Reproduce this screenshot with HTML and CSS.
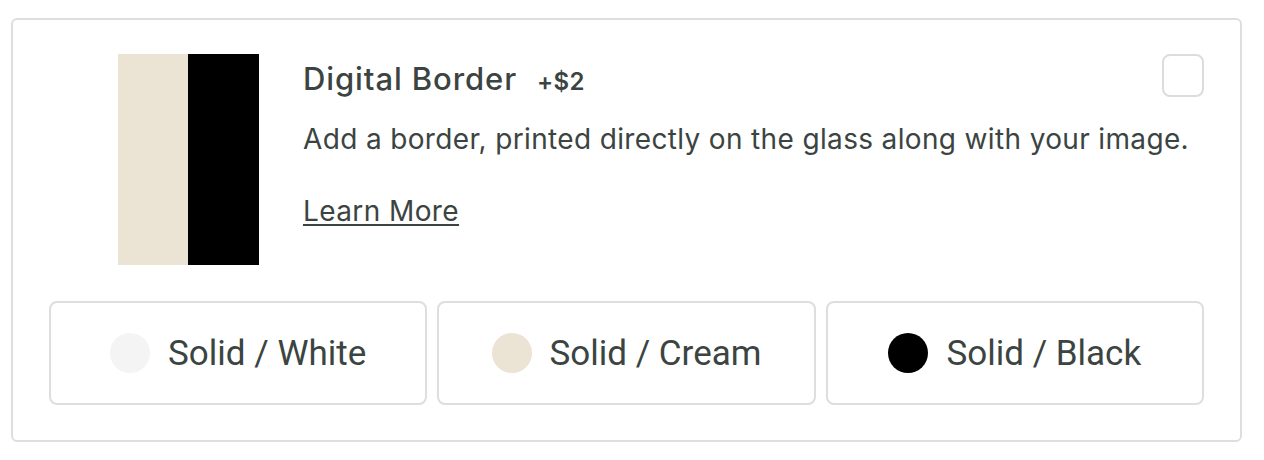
FILE: index.html
```html
<!DOCTYPE html>
<html lang="en">
<head>
<meta charset="utf-8">
<title>Digital Border</title>
<link rel="stylesheet" href="styles.css">
</head>
<body>
<div class="page">
  <section class="card">
    <div class="top">
      <div class="preview">
        <div class="half cream"></div>
        <div class="half black"></div>
      </div>
      <div class="info">
        <div class="title-row">
          <div class="heading">
            <span class="title">Digital Border</span>
            <span class="price">+$2</span>
          </div>
          <div class="checkbox"></div>
        </div>
        <p class="desc">Add a border, printed directly on the glass along with your image.</p>
        <a class="learn" href="#">Learn More</a>
      </div>
    </div>
    <div class="options">
      <button class="option"><span class="dot dot-white"></span><span class="label">Solid / White</span></button>
      <button class="option"><span class="dot dot-cream"></span><span class="label">Solid / Cream</span></button>
      <button class="option"><span class="dot dot-black"></span><span class="label">Solid / Black</span></button>
    </div>
  </section>
</div>
</body>
</html>
```

FILE: styles.css
```css
* { box-sizing: border-box; }
html, body { margin: 0; background: #fff; }
body {
  font-family: Roboto, "Liberation Sans", Arial, sans-serif;
  color: #3b4441;
}
.page {
  padding: 18px 22px 18px 11px;
}
.card {
  border: 2px solid #dedede;
  border-radius: 6px;
  padding: 34px 36px 35px 36px;
}
.top {
  display: flex;
  align-items: flex-start;
}
.preview {
  display: flex;
  width: 141px;
  height: 211px;
  margin-left: 69px;
  flex: none;
}
.half { height: 100%; }
.cream { width: 70px; background: #ebe3d4; }
.black { width: 71px; background: #000; }
.info {
  flex: 1;
  min-width: 0;
  margin-left: 44px;
  padding-top: 7px;
  font-family: Inter, Roboto, sans-serif;
}
.title-row {
  display: flex;
  justify-content: space-between;
  align-items: flex-start;
  height: 36px;
}
.heading {
  display: flex;
  align-items: baseline;
  line-height: 36px;
}
.title {
  font-size: 31px;
  font-weight: 500;
  letter-spacing: 0.9px;
}
.price {
  font-size: 24px;
  font-weight: 600;
  letter-spacing: 0.4px;
  margin-left: 20px;
}
.checkbox {
  flex: none;
  width: 42px;
  height: 43px;
  margin-top: -7px;
  border: 2px solid #dcdcdc;
  border-radius: 8px;
}
.desc {
  margin: 24px 0 0;
  font-size: 28px;
  line-height: 36px;
  letter-spacing: 0.35px;
  white-space: nowrap;
}
.learn {
  display: inline-block;
  margin-top: 36px;
  font-size: 28px;
  line-height: 36px;
  letter-spacing: 0.4px;
  color: #3b4441;
  text-decoration: underline;
  text-decoration-thickness: 2px;
  text-underline-offset: 3px;
}
.options {
  display: grid;
  grid-template-columns: repeat(3, 1fr);
  gap: 10px;
  margin-top: 36px;
}
.option {
  display: flex;
  align-items: center;
  justify-content: center;
  gap: 18px;
  height: 104px;
  background: #fff;
  border: 2px solid #dedede;
  border-radius: 8px;
  font-family: inherit;
  color: #3b4441;
  padding: 0;
}
.dot {
  width: 40px;
  height: 40px;
  border-radius: 50%;
  flex: none;
}
.dot-white { background: #f4f4f4; }
.dot-cream { background: #ebe3d3; }
.dot-black { background: #000; }
.label {
  font-size: 35px;
  font-weight: 400;
}
```
